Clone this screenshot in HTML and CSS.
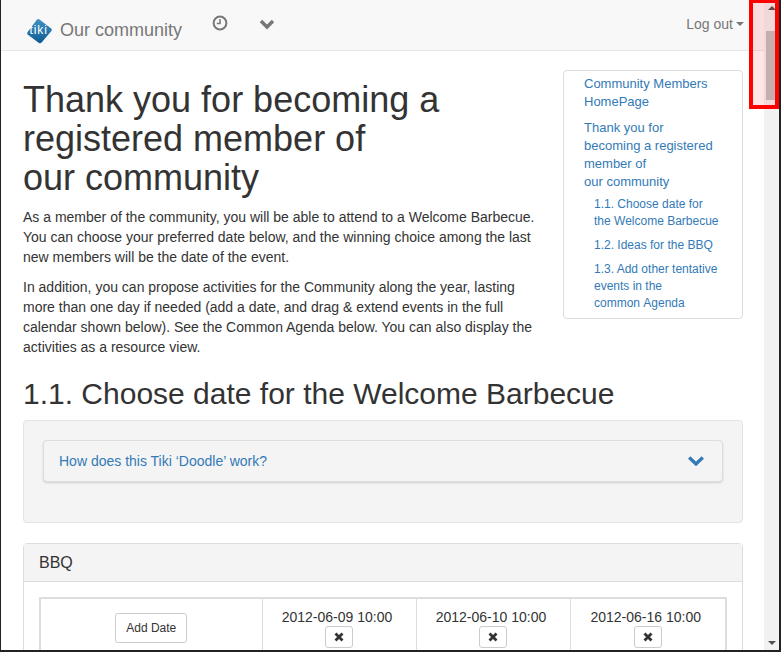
FILE: index.html
```html
<!DOCTYPE html>
<html lang="en">
<head>
<meta charset="utf-8">
<title>Our community</title>
<link rel="stylesheet" href="styles.css">
</head>
<body>
<div class="window">
  <div class="viewport">
    <header class="navbar">
      <a class="brand">
        <svg class="logo" width="28" height="28" viewBox="0 0 28 28"><defs><linearGradient id="g" x1="0" y1="0" x2="0" y2="1"><stop offset="0" stop-color="#3f94c4"/><stop offset="1" stop-color="#0d5a92"/></linearGradient></defs><path d="M11 3.6 Q12 2.6 13.5 3.4 L25.2 12.4 Q26.4 13.6 25.4 15 L15.6 26.6 Q14.4 27.8 13 27 L1.6 18.6 Q.6 17.4 1.6 16 Z" fill="url(#g)"/><text x="3.5" y="18" class="logo-text">tiki</text></svg>
        <span class="brand-name">Our community</span>
      </a>
      <svg class="nav-clock" width="16" height="16" viewBox="0 0 16 16"><circle cx="8" cy="8" r="6.4" fill="none" stroke="#777" stroke-width="2"/><path d="M8 4v4.4H4.8" fill="none" stroke="#777" stroke-width="1.5"/></svg>
      <svg class="nav-chev" width="16" height="12" viewBox="0 0 16 12"><path d="M2 3l6 6 6-6" fill="none" stroke="#777" stroke-width="3.4"/></svg>
      <a class="logout">Log out<span class="caret"></span></a>
    </header>
    <main class="content">
      <div class="intro">
        <div class="intro-text">
          <h1>Thank you for becoming a registered member of <br>our community</h1>
          <p>As a member of the community, you will be able to attend to a Welcome Barbecue. You can choose your preferred date below, and the winning choice among the last new members will be the date of the event.</p>
          <p>In addition, you can propose activities for the Community along the year, lasting more than one day if needed (add a date, and drag &amp; extend events in the full calendar shown below). See the Common Agenda below. You can also display the activities as a resource view.</p>
        </div>
        <nav class="toc">
          <a class="toc-top">Community Members HomePage</a>
          <a class="toc-top toc-last">Thank you for becoming a registered member of <br>our community</a>
          <a class="toc-sub">1.1. Choose date for the Welcome Barbecue</a>
          <a class="toc-sub">1.2. Ideas for the BBQ</a>
          <a class="toc-sub">1.3. Add other tentative events in the common&nbsp;Agenda</a>
        </nav>
      </div>
      <h2>1.1. Choose date for the Welcome Barbecue</h2>
      <section class="well">
        <div class="accordion">
          <a>How does this Tiki ‘Doodle’ work?</a>
          <svg width="18" height="12" viewBox="0 0 18 12"><path d="M2.2 2.5L9 9l6.8-6.5" fill="none" stroke="#337ab7" stroke-width="3.4"/></svg>
        </div>
      </section>
      <section class="panel">
        <div class="panel-heading">BBQ</div>
        <div class="panel-body">
          <table class="dates">
            <tr>
              <td class="add-cell"><button class="btn">Add Date</button></td>
              <td><span class="date">2012-06-09 10:00</span><button class="btn btn-x"><svg width="10" height="10" viewBox="0 0 10 10"><path d="M1.5 1.5l7 7M8.5 1.5l-7 7" stroke="#333" stroke-width="2.8"/></svg></button></td>
              <td><span class="date">2012-06-10 10:00</span><button class="btn btn-x"><svg width="10" height="10" viewBox="0 0 10 10"><path d="M1.5 1.5l7 7M8.5 1.5l-7 7" stroke="#333" stroke-width="2.8"/></svg></button></td>
              <td class="last-cell"><span class="date">2012-06-16 10:00</span><button class="btn btn-x"><svg width="10" height="10" viewBox="0 0 10 10"><path d="M1.5 1.5l7 7M8.5 1.5l-7 7" stroke="#333" stroke-width="2.8"/></svg></button></td>
            </tr>
          </table>
        </div>
      </section>
    </main>
  </div>
  <div class="scrollbar">
    <span class="arrow-up"></span>
    <div class="track"><div class="thumb"></div></div>
    <span class="arrow-down"></span>
  </div>
  <div class="highlight"></div>
</div>
</body>
</html>
```

FILE: styles.css
```css
* { box-sizing: border-box; }
html, body { margin: 0; padding: 0; height: 100%; overflow: hidden; }
body { font-family: "Liberation Sans", Arial, sans-serif; font-size: 14px; line-height: 20px; color: #333; background: #fff; }
a { color: #337ab7; text-decoration: none; }
.window { position: relative; width: 781px; height: 652px; display: flex; border-left: 1px solid #222; border-right: 2px solid #222; border-bottom: 2px solid #222; overflow: hidden; }
.viewport { flex: 1; min-width: 0; height: 650px; overflow: hidden; }
.navbar { height: 51px; display: flex; align-items: flex-start; background: #f8f8f8; border-bottom: 1px solid #e7e7e7; position: relative; }
.brand { display: flex; align-items: center; margin: 16px 0 0 25px; }
.logo { display: block; }
.logo-text { font: 12px "Liberation Sans", sans-serif; letter-spacing: .9px; fill: #fff; }
.brand-name { font-size: 18px; line-height: 26px; color: #777; margin-left: 6px; }
.nav-clock { margin: 15px 0 0 30px; }
.nav-chev { margin: 18px 0 0 31px; }
.logout { margin: 14px 20px 0 auto; color: #777; display: flex; align-items: center; }
.caret { width: 0; height: 0; margin-left: 3px; border-top: 4px solid #777; border-left: 4px solid transparent; border-right: 4px solid transparent; }
.content { padding: 19px 21px 0 22px; }
.intro { display: flex; justify-content: space-between; align-items: flex-start; }
.intro-text { width: 520px; }
h1 { margin: 10px 0 10px; font-size: 36px; line-height: 39px; font-weight: 400; color: #333; }
h2 { margin: 10px 0 10px; font-size: 30px; line-height: 33px; font-weight: 400; color: #333; }
p { margin: 0 0 10px; }
.toc { width: 180px; padding: 4px 20px 6px; border: 1px solid #ddd; border-radius: 4px; font-size: 13px; line-height: 18px; display: flex; flex-direction: column; }
.toc-top { margin-bottom: 8px; }
.toc-last { margin-bottom: 5px; }
.toc-sub { font-size: 12px; line-height: 17px; padding-left: 10px; margin-bottom: 7px; }
.toc-sub:last-child { margin-bottom: 0; }
.well { height: 103px; background: #f4f4f4; border: 1px solid #e3e3e3; border-radius: 4px; padding: 19px; margin-bottom: 20px; }
.accordion { height: 42px; display: flex; align-items: center; justify-content: space-between; padding: 0 17px 0 15px; background: #f4f4f4; border: 1px solid #ddd; border-radius: 4px; box-shadow: 0 1px 2px rgba(0,0,0,.15); }
.panel { border: 1px solid #ddd; border-radius: 4px 4px 0 0; }
.panel-heading { height: 38px; padding: 9px 15px; font-size: 16px; line-height: 20px; background: #f4f4f4; border-bottom: 1px solid #ddd; }
.panel-body { padding: 15px; }
.dates { width: 688px; border-collapse: collapse; border: 2px solid #ddd; table-layout: fixed; }
.dates td { border: 1px solid #ddd; text-align: center; padding: 8px; vertical-align: top; width: 154px; height: 80px; }
.dates .add-cell { width: 222px; padding-top: 14px; }
.dates .last-cell { width: auto; }
.date { display: block; padding-right: 4px; }
.btn { display: inline-block; font: 12px/18px "Liberation Sans", sans-serif; color: #333; background: #fff; border: 1px solid #ccc; border-radius: 3px; padding: 5px 10px; }
.btn-x { display: block; width: 28px; height: 22px; margin: -1px auto 0; padding: 0; line-height: 0; }
.scrollbar { width: 15px; height: 650px; background: #f1f1f1; flex: none; position: relative; display: flex; flex-direction: column; align-items: center; }
.arrow-up { position: absolute; top: 6px; border-bottom: 4px solid #505050; border-left: 4px solid transparent; border-right: 4px solid transparent; }
.arrow-down { position: absolute; bottom: 5px; border-top: 4px solid #505050; border-left: 4px solid transparent; border-right: 4px solid transparent; }
.track { width: 100%; height: 100%; padding: 31px 0 0; }
.thumb { margin-left: 2px; width: 11px; height: 69px; background: #c1c1c1; }
.highlight { position: absolute; left: 748px; top: -1px; width: 30px; height: 110px; border: 4px solid #f00; background: rgba(255,0,0,.1); }
```
